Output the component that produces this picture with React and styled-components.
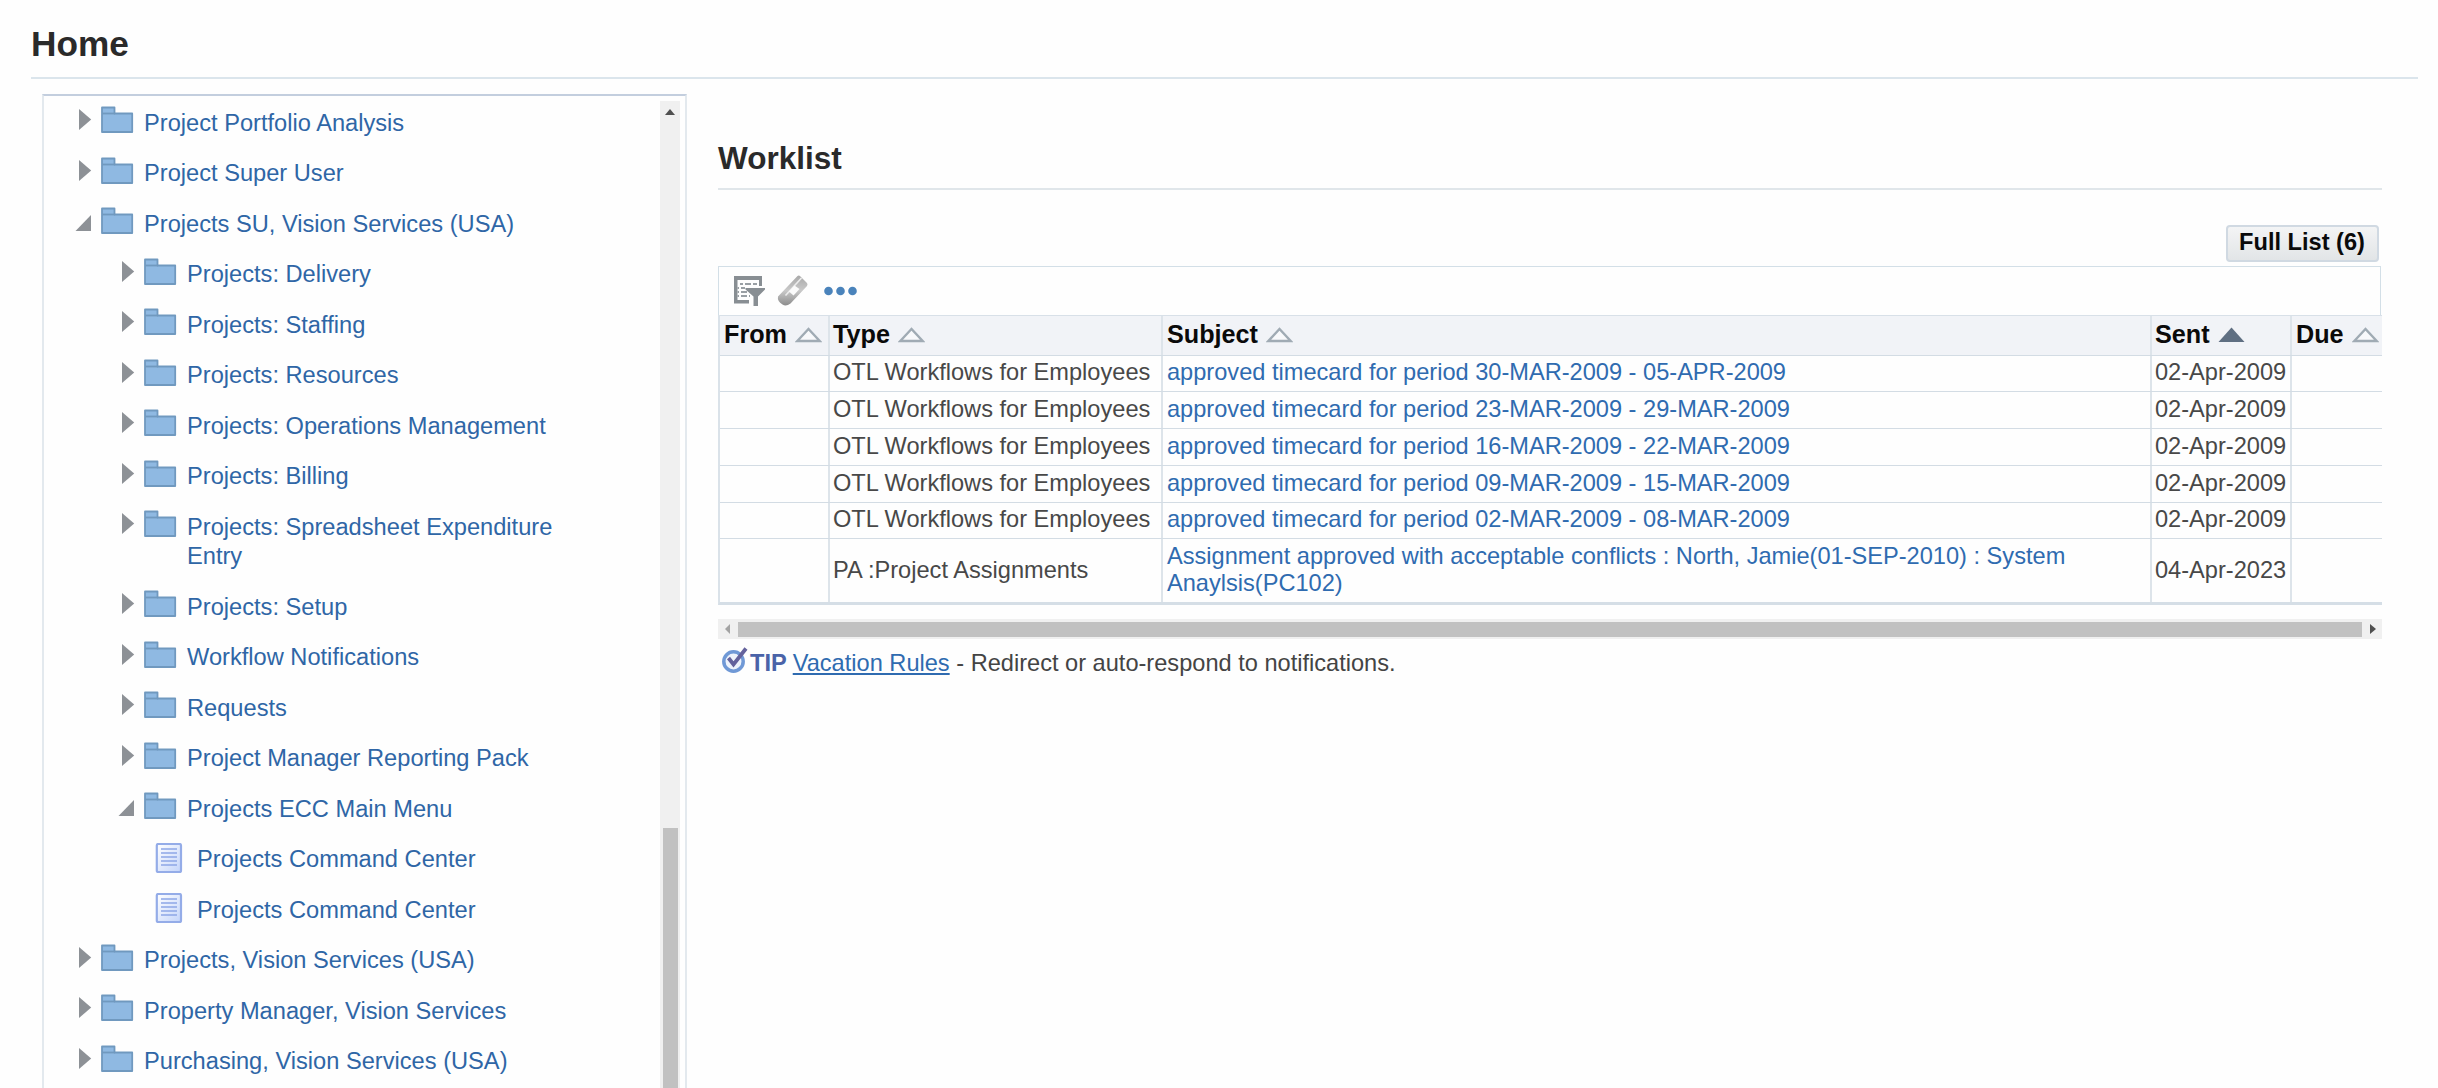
import React from "react";
import styled, { createGlobalStyle } from "styled-components";

const Global = createGlobalStyle`
  * { box-sizing: border-box; }
  body { margin: 0; background: #fefefe; overflow: hidden; font-family: "Liberation Sans", Arial, sans-serif; }
`;

const Page = styled.div`
  width: 2438px;
  height: 1088px;
  overflow: hidden;
  padding: 0 20px 0 31px;
  display: flex;
  flex-direction: column;
`;
const PageTitle = styled.h1`
  margin: 0;
  height: 79px;
  flex: none;
  padding-top: 24px;
  font-size: 35.2px;
  line-height: 40px;
  color: #2a2a2a;
  border-bottom: 2px solid #dbe5ec;
`;
const Columns = styled.div`
  flex: 1;
  display: flex;
  padding: 15px 36px 0 11px;
  min-height: 0;
`;
const TreePanel = styled.section`
  width: 645px;
  flex: none;
  border: 2px solid #e3e9ee;
  border-top-color: #c3cede;
  border-bottom: 0;
  display: flex;
  padding-right: 5px;
`;
const Tree = styled.ul`
  flex: 1;
  list-style: none;
  margin: 0;
  padding: 10px 0 0 0;
`;
const TreeRow = styled.li`
  display: flex;
  align-items: flex-start;
  height: ${(p) => (p.$tall ? 80 : 50.5)}px;
  padding-left: ${(p) => p.$indent}px;
  svg { flex: none; display: block; }
`;
const TreeLink = styled.a`
  margin-left: ${(p) => p.$gap}px;
  padding-top: 2.6px;
  font-size: 23.65px;
  line-height: 29px;
  color: #2f66a6;
  max-width: 400px;
  white-space: pre-line;
`;
const VTrack = styled.div`
  width: 20px;
  flex: none;
  margin-top: 5px;
  background: #f0f0f0;
  display: flex;
  flex-direction: column;
  align-items: center;
  padding-top: 8px;
`;
const VThumb = styled.div`
  width: 15px;
  margin-top: 713px;
  flex: 1;
  background: #c1c1c1;
`;

const Main = styled.main`
  margin-left: 31px;
  width: 1664px;
  flex: none;
`;
const SectionTitle = styled.h2`
  margin: 0;
  height: 96px;
  padding-top: 46px;
  font-size: 31.5px;
  line-height: 36px;
  color: #2a2a2a;
  border-bottom: 2px solid #e0e6ea;
`;
const Actions = styled.div`
  display: flex;
  justify-content: flex-end;
  padding: 35px 3px 4px 0;
`;
const Button = styled.button`
  width: 153px;
  height: 37px;
  padding: 0 1px 3px 0;
  border: 2px solid #d0d9e2;
  border-radius: 4px;
  background: linear-gradient(#f3f4f5, #e2e5e7);
  font: bold 23.6px/28px "Liberation Sans", Arial, sans-serif;
  color: #0a0a0a;
`;
const Toolbar = styled.div`
  width: 1663px;
  height: 49px;
  border: 1.5px solid #d3dfe7;
  border-bottom: 0;
  display: flex;
  padding: 8px 0 0 14px;
  svg { display: block; }
`;
const Tool = styled.span`
  display: block;
  margin-right: ${(p) => p.$gap || 0}px;
`;
const Grid = styled.div`
  border-left: 2px solid #dae2e9;
  border-bottom: 3px solid #d5dee6;
`;
const GridRow = styled.div`
  display: grid;
  grid-template-columns: 108px 333px 989px 140px 92px;
  height: ${(p) => p.$h}px;
  background: ${(p) => (p.$head ? "#f1f3f7" : "transparent")};
  border-top: 1.5px solid ${(p) => (p.$head ? "#d8e0e8" : "#d3dce4")};
`;
const Cell = styled.div`
  display: flex;
  align-items: center;
  padding: 0 0 1px ${(p) => (p.$link ? 4 : 3)}px;
  white-space: pre;
  font-size: 23.6px;
  line-height: 27.4px;
  color: ${(p) => (p.$link ? "#2f6bb0" : "#484848")};
  border-left: ${(p) => (p.$first ? 0 : "2px solid #dde4ea")};
`;
const HeadCell = styled(Cell)`
  font-weight: bold;
  font-size: 25.2px;
  color: #0a0a0a;
  gap: 8px;
  padding: 0 0 2px ${(p) => (p.$inset ? 4 : 3)}px;
  svg { margin-top: 2px; flex: none; }
`;
const HTrack = styled.div`
  margin-top: 14px;
  height: 20px;
  background: #f0f0f0;
  display: flex;
  align-items: center;
  padding: 0 6px 0 7px;
`;
const HThumb = styled.div`
  flex: 1;
  height: 15px;
  margin: 0 8px;
  background: #c1c1c1;
`;
const Tip = styled.p`
  margin: 0;
  padding: 7px 0 0 3px;
  display: flex;
  align-items: flex-start;
  font-size: 23.6px;
  line-height: 34px;
  color: #444444;
  white-space: pre;
  a { color: #2f6bb0; text-decoration: underline; text-decoration-thickness: 2px; text-underline-offset: 2px; }
`;
const TipLabel = styled.b`
  color: #4a63a8;
  margin: 0 6px 0 0;
`;

const Arrow = ({ open }) => (
  <svg width="25" height="28" viewBox="0 0 25 28">
    <path d={open ? "M0.5 24 L16 24 L16 8 Z" : "M4 3 L16.2 13.500 L4 24 Z"} fill="#8d9196" />
  </svg>
);
const Folder = () => (
  <svg width="34" height="28" viewBox="0 0 34 28">
    <path d="M2 1.500 H14.500 V7.500 H32.200 V26 H2 Z" fill="#8fb9e2" stroke="#7099bf" strokeWidth="1.8" strokeLinejoin="round" />
    <path d="M2 7.500 H15" stroke="#7099bf" strokeWidth="1.8" />
  </svg>
);
const Doc = () => (
  <svg width="28" height="32" viewBox="0 0 28 32">
    <defs>
      <linearGradient id="doc" x1="0" y1="0" x2="1" y2="1">
        <stop offset="0" stopColor="#ffffff" />
        <stop offset="1" stopColor="#c3d4fa" />
      </linearGradient>
    </defs>
    <rect x="1.800" y="1" width="24.200" height="28" rx="1.500" fill="url(#doc)" stroke="#94ace8" strokeWidth="2.200" />
    <path d="M6 6H22M6 10H22M6 14H22M6 18H22M6 22H22" stroke="#8da6e6" strokeWidth="1.600" />
  </svg>
);
const Sort = ({ active }) => (
  <svg width="27" height="16" viewBox="0 0 27 16">
    {active ? (
      <path d="M0.5 15 L13.5 0.5 L26.5 15 Z" fill="#5f6f82" />
    ) : (
      <path d="M2.300 14 L13.500 2 L24.700 14 Z" fill="#f8f9fb" stroke="#a0abb4" strokeWidth="2.400" />
    )}
  </svg>
);
const QueryIcon = () => (
  <svg width="33" height="31" viewBox="0 0 33 31">
    <path d="M1 1 H29 V11 H26 V5 H4.500 V25 H16 V28.500 H1 Z" fill="#888e93" />
    <path d="M7 9H10M12 9H18M20 9H24M4.500 13H6M8 13H12M4.500 17H6M8 17H14M4.500 21H6M8 21H14M16 21H17" stroke="#999fa4" strokeWidth="2.200" />
    <path d="M12.500 13 H32 V14.500 L25 21.500 V31 H20.500 V21.500 L12.500 14.500 Z" fill="#888e93" />
  </svg>
);
const EraserIcon = () => (
  <svg width="32" height="32" viewBox="0 0 32 32">
    <defs>
      <linearGradient id="eraser" x1="0" y1="0" x2="0" y2="1">
        <stop offset="0" stopColor="#a9a9a9" />
        <stop offset="0.5" stopColor="#c9c9c9" />
        <stop offset="1" stopColor="#8c8c8c" />
      </linearGradient>
    </defs>
    <path d="M20.500 1 Q22 0 23.500 1.500 L30 8 Q31 9.500 30 11 L13.500 28.500 Q9 32 5.500 29.500 Q0 26 1 21.500 Z" fill="url(#eraser)" />
    <path d="M24.500 3 L8.500 20.500" stroke="#ececec" strokeWidth="1.600" />
    <path d="M17.500 10.500 L22.500 14 L16.500 20.500 L12 16.500 Z" fill="#fbfbfb" />
  </svg>
);
const Dots = () => (
  <svg width="34" height="31" viewBox="0 0 34 31">
    {[4.5, 16.5, 28.5].map((x) => (
      <circle key={x} cx={x} cy="16" r="4.300" fill="#4a83bb" />
    ))}
  </svg>
);
const Check = () => (
  <svg width="29" height="29" viewBox="0 0 29 29">
    <circle cx="12.500" cy="15.500" r="9.700" fill="#eef3fb" stroke="#7099d6" strokeWidth="3.500" />
    <path d="M7.500 12 L12.500 18.500 L25 2.500" fill="none" stroke="#64629c" strokeWidth="3.800" />
  </svg>
);
const Tri = ({ w, h, d, fill }) => (
  <svg width={w} height={h} viewBox={`0 0 ${w} ${h}`}>
    <path d={d} fill={fill} />
  </svg>
);

const items = [
  [0, "Project Portfolio Analysis"],
  [0, "Project Super User"],
  [0, "Projects SU, Vision Services (USA)", "open"],
  [1, "Projects: Delivery"],
  [1, "Projects: Staffing"],
  [1, "Projects: Resources"],
  [1, "Projects: Operations Management"],
  [1, "Projects: Billing"],
  [1, "Projects: Spreadsheet Expenditure\nEntry", "tall"],
  [1, "Projects: Setup"],
  [1, "Workflow Notifications"],
  [1, "Requests"],
  [1, "Project Manager Reporting Pack"],
  [1, "Projects ECC Main Menu", "open"],
  [2, "Projects Command Center", "doc"],
  [2, "Projects Command Center", "doc"],
  [0, "Projects, Vision Services (USA)"],
  [0, "Property Manager, Vision Services"],
  [0, "Purchasing, Vision Services (USA)"],
];
const indents = [31, 74, 111];

const columns = ["From", "Type", "Subject", "Sent", "Due"];
const otl = "OTL Workflows for Employees";
const rows = [
  [otl, "approved timecard for period 30-MAR-2009 - 05-APR-2009", "02-Apr-2009"],
  [otl, "approved timecard for period 23-MAR-2009 - 29-MAR-2009", "02-Apr-2009"],
  [otl, "approved timecard for period 16-MAR-2009 - 22-MAR-2009", "02-Apr-2009"],
  [otl, "approved timecard for period 09-MAR-2009 - 15-MAR-2009", "02-Apr-2009"],
  [otl, "approved timecard for period 02-MAR-2009 - 08-MAR-2009", "02-Apr-2009"],
  [
    "PA :Project Assignments",
    "Assignment approved with acceptable conflicts : North, Jamie(01-SEP-2010) : System\nAnaylsis(PC102)",
    "04-Apr-2023",
  ],
];

export default function App() {
  return (
    <Page>
      <Global />
      <PageTitle>Home</PageTitle>
      <Columns>
        <TreePanel>
          <Tree>
            {items.map(([level, label, kind], i) => (
              <TreeRow key={i} $indent={indents[level]} $tall={kind === "tall"}>
                {kind === "doc" ? (
                  <Doc />
                ) : (
                  <>
                    <Arrow open={kind === "open"} />
                    <Folder />
                  </>
                )}
                <TreeLink $gap={kind === "doc" ? 14 : 10}>{label}</TreeLink>
              </TreeRow>
            ))}
          </Tree>
          <VTrack>
            <Tri w={10} h={6} d="M0 6 L5 0 L10 6 Z" fill="#505050" />
            <VThumb />
          </VTrack>
        </TreePanel>
        <Main>
          <SectionTitle>Worklist</SectionTitle>
          <Actions>
            <Button>Full List (6)</Button>
          </Actions>
          <Toolbar>
            <Tool $gap={11}><QueryIcon /></Tool>
            <Tool $gap={15}><EraserIcon /></Tool>
            <Tool><Dots /></Tool>
          </Toolbar>
          <Grid>
            <GridRow $head $h={39.5}>
              {columns.map((name, i) => (
                <HeadCell key={name} $first={i === 0} $inset={name !== "Type" && name !== "Sent"}>
                  {name}
                  <Sort active={name === "Sent"} />
                </HeadCell>
              ))}
            </GridRow>
            {rows.map(([type, subject, sent], i) => (
              <GridRow key={i} $h={i === 5 ? 64 : 36.8}>
                <Cell $first />
                <Cell>{type}</Cell>
                <Cell $link>{subject}</Cell>
                <Cell>{sent}</Cell>
                <Cell />
              </GridRow>
            ))}
          </Grid>
          <HTrack>
            <Tri w={5} h={10} d="M5 0 L0 5 L5 10 Z" fill="#a3a3a3" />
            <HThumb />
            <Tri w={6} h={10} d="M0 0 L6 5 L0 10 Z" fill="#505050" />
          </HTrack>
          <Tip>
            <Check />
            <TipLabel>TIP</TipLabel>
            <a>Vacation Rules</a>
            <span> - Redirect or auto-respond to notifications.</span>
          </Tip>
        </Main>
      </Columns>
    </Page>
  );
}
